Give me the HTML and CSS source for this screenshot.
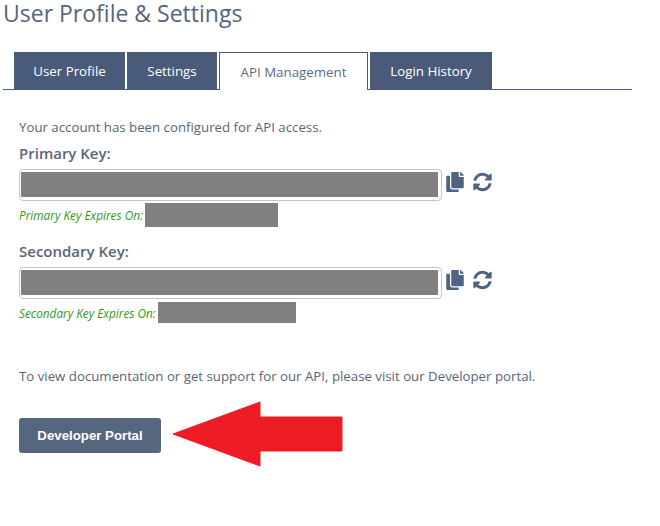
FILE: index.html
```html
<!DOCTYPE html>
<html lang="en">
<head>
    <meta charset="UTF-8">
    <meta name="viewport" content="width=device-width, initial-scale=1.0">
    <title>User Profile &amp; Settings</title>
    <link rel="stylesheet" href="styles.css">
</head>
<body>
    <h1>User Profile &amp; Settings</h1>
    <div class="tabs">
        <a class="tab tab-profile">User Profile</a>
        <a class="tab tab-settings">Settings</a>
        <a class="tab tab-api active">API Management</a>
        <a class="tab tab-history">Login History</a>
    </div>
    <div class="panel">
        <p class="intro">Your account has been configured for API access.</p>

        <label class="key-label">Primary Key:</label>
        <div class="key-row">
            <div class="key-box"><div class="redacted"></div></div>
            <svg class="icon icon-copy" viewBox="0 0 448 512"><path d="M320 448v40c0 13.255-10.745 24-24 24H24c-13.255 0-24-10.745-24-24V120c0-13.255 10.745-24 24-24h72v296c0 30.879 25.121 56 56 56h168zm0-344V0H152c-13.255 0-24 10.745-24 24v368c0 13.255 10.745 24 24 24h272c13.255 0 24-10.745 24-24V128H344c-13.2 0-24-10.8-24-24zm120.971-31.029L375.029 7.029A24 24 0 0 0 358.059 0H352v96h96v-6.059a24 24 0 0 0-7.029-16.97z"/></svg>
            <svg class="icon icon-sync" viewBox="0 0 512 512"><path d="M370.72 133.28C339.458 104.008 298.888 87.962 255.848 88c-77.458.068-144.328 53.178-162.791 126.85-1.344 5.363-6.122 9.15-11.651 9.15H24.103c-7.498 0-13.194-6.807-11.807-14.176C33.933 94.924 134.813 8 256 8c66.448 0 126.791 26.136 171.315 68.685L463.03 40.97C478.149 25.851 504 36.559 504 57.941V192c0 13.255-10.745 24-24 24H345.941c-21.382 0-32.09-25.851-16.971-40.971l41.75-41.749zM32 296h134.059c21.382 0 32.09 25.851 16.971 40.971l-41.75 41.75c31.262 29.273 71.835 45.319 114.876 45.28 77.418-.07 144.315-53.144 162.787-126.849 1.344-5.363 6.122-9.15 11.651-9.15h57.304c7.498 0 13.194 6.807 11.807 14.176C478.067 417.076 377.187 504 256 504c-66.448 0-126.791-26.136-171.315-68.685L48.97 471.03C33.851 486.149 8 475.441 8 454.059V320c0-13.255 10.745-24 24-24z"/></svg>
        </div>
        <div class="expires expires-primary"><em>Primary Key Expires On:</em><span class="date-block"></span></div>

        <label class="key-label key-label-second">Secondary Key:</label>
        <div class="key-row">
            <div class="key-box"><div class="redacted"></div></div>
            <svg class="icon icon-copy" viewBox="0 0 448 512"><path d="M320 448v40c0 13.255-10.745 24-24 24H24c-13.255 0-24-10.745-24-24V120c0-13.255 10.745-24 24-24h72v296c0 30.879 25.121 56 56 56h168zm0-344V0H152c-13.255 0-24 10.745-24 24v368c0 13.255 10.745 24 24 24h272c13.255 0 24-10.745 24-24V128H344c-13.2 0-24-10.8-24-24zm120.971-31.029L375.029 7.029A24 24 0 0 0 358.059 0H352v96h96v-6.059a24 24 0 0 0-7.029-16.97z"/></svg>
            <svg class="icon icon-sync" viewBox="0 0 512 512"><path d="M370.72 133.28C339.458 104.008 298.888 87.962 255.848 88c-77.458.068-144.328 53.178-162.791 126.85-1.344 5.363-6.122 9.15-11.651 9.15H24.103c-7.498 0-13.194-6.807-11.807-14.176C33.933 94.924 134.813 8 256 8c66.448 0 126.791 26.136 171.315 68.685L463.03 40.97C478.149 25.851 504 36.559 504 57.941V192c0 13.255-10.745 24-24 24H345.941c-21.382 0-32.09-25.851-16.971-40.971l41.75-41.749zM32 296h134.059c21.382 0 32.09 25.851 16.971 40.971l-41.75 41.75c31.262 29.273 71.835 45.319 114.876 45.28 77.418-.07 144.315-53.144 162.787-126.849 1.344-5.363 6.122-9.15 11.651-9.15h57.304c7.498 0 13.194 6.807 11.807 14.176C478.067 417.076 377.187 504 256 504c-66.448 0-126.791-26.136-171.315-68.685L48.97 471.03C33.851 486.149 8 475.441 8 454.059V320c0-13.255 10.745-24 24-24z"/></svg>
        </div>
        <div class="expires expires-secondary"><em>Secondary Key Expires On:</em><span class="date-block"></span></div>

        <p class="docs">To view documentation or get support for our API, please visit our Developer portal.</p>
        <button class="portal-btn">Developer Portal</button>
    </div>
    <svg class="arrow" viewBox="0 0 173 67"><path d="M2 33L89 1V16H171V50H89V65Z" fill="#ed1c24" stroke="#ed1c24" stroke-width="1" stroke-linejoin="round"/></svg>
</body>
</html>
```

FILE: styles.css
```css
body {
    font-family: "Open Sans", "Noto Sans", sans-serif;
    background-color: white;
    color: #5a6478;
    margin: 0;
    height: 526px;
    overflow: hidden;
    position: relative;
}
h1 {
    font-size: 23px;
    font-weight: 400;
    line-height: 26px;
    color: #56657e;
    margin: 0;
    padding-left: 3px;
}
.tabs {
    display: flex;
    gap: 2px;
    margin: 26px 28px 0 3px;
    padding-left: 11px;
    height: 37px;
    border-bottom: 1px solid #4a5b7a;
}
.tab {
    display: flex;
    align-items: center;
    justify-content: center;
    height: 37px;
    font-size: 13.3px;
    background: #4a5b7a;
    color: white;
    box-sizing: border-box;
}
.tab-profile { width: 111px; }
.tab-settings { width: 90px; }
.tab-api { width: 149px; }
.tab-history { width: 122px; }
.tab.active {
    background: white;
    color: #5a6b84;
    border: 1px solid #4a5b7a;
    border-bottom: none;
    height: 38px;
}
.panel {
    padding: 29px 0 0 19px;
}
.intro {
    font-size: 13.25px;
    line-height: 17px;
    margin: 0;
}
.key-label {
    display: block;
    font-size: 15px;
    font-weight: 600;
    line-height: 20px;
    margin-top: 7px;
    color: #5d6579;
}
.key-label-second {
    margin-top: 14px;
}
.key-row {
    display: flex;
    align-items: flex-start;
    margin-top: 6px;
}
.key-box {
    width: 423px;
    height: 32px;
    box-sizing: border-box;
    border: 1px solid #c4c4cc;
    border-radius: 4px;
    padding: 2px 3px 3px 1px;
}
.redacted {
    height: 100%;
    background: #808080;
}
.icon {
    fill: #4f6482;
    height: 20px;
    margin-top: 3px;
}
.icon-copy {
    width: 18px;
    margin-left: 4px;
}
.icon-sync {
    width: 19px;
    margin-left: 9px;
}
.expires {
    display: flex;
    color: #2e9a1a;
    font-size: 11.8px;
}
.expires em {
    align-self: center;
}
.date-block {
    display: block;
    background: #808080;
}
.expires-primary {
    margin-top: 2px;
}
.expires-primary .date-block {
    width: 133px;
    height: 24px;
    margin-left: 2px;
}
.expires-secondary {
    margin-top: 3px;
}
.expires-secondary .date-block {
    width: 138px;
    height: 21px;
    margin-left: 2px;
}
.docs {
    font-size: 13.25px;
    line-height: 17px;
    margin: 45px 0 0;
}
.portal-btn {
    display: block;
    margin-top: 33px;
    width: 142px;
    height: 35px;
    border: none;
    border-radius: 3px;
    background: #56667f;
    color: white;
    font-family: "Liberation Sans", Arial, sans-serif;
    font-size: 13.25px;
    font-weight: 700;
    padding: 0;
}
.arrow {
    position: absolute;
    left: 171px;
    top: 401px;
    width: 173px;
    height: 67px;
}
```
